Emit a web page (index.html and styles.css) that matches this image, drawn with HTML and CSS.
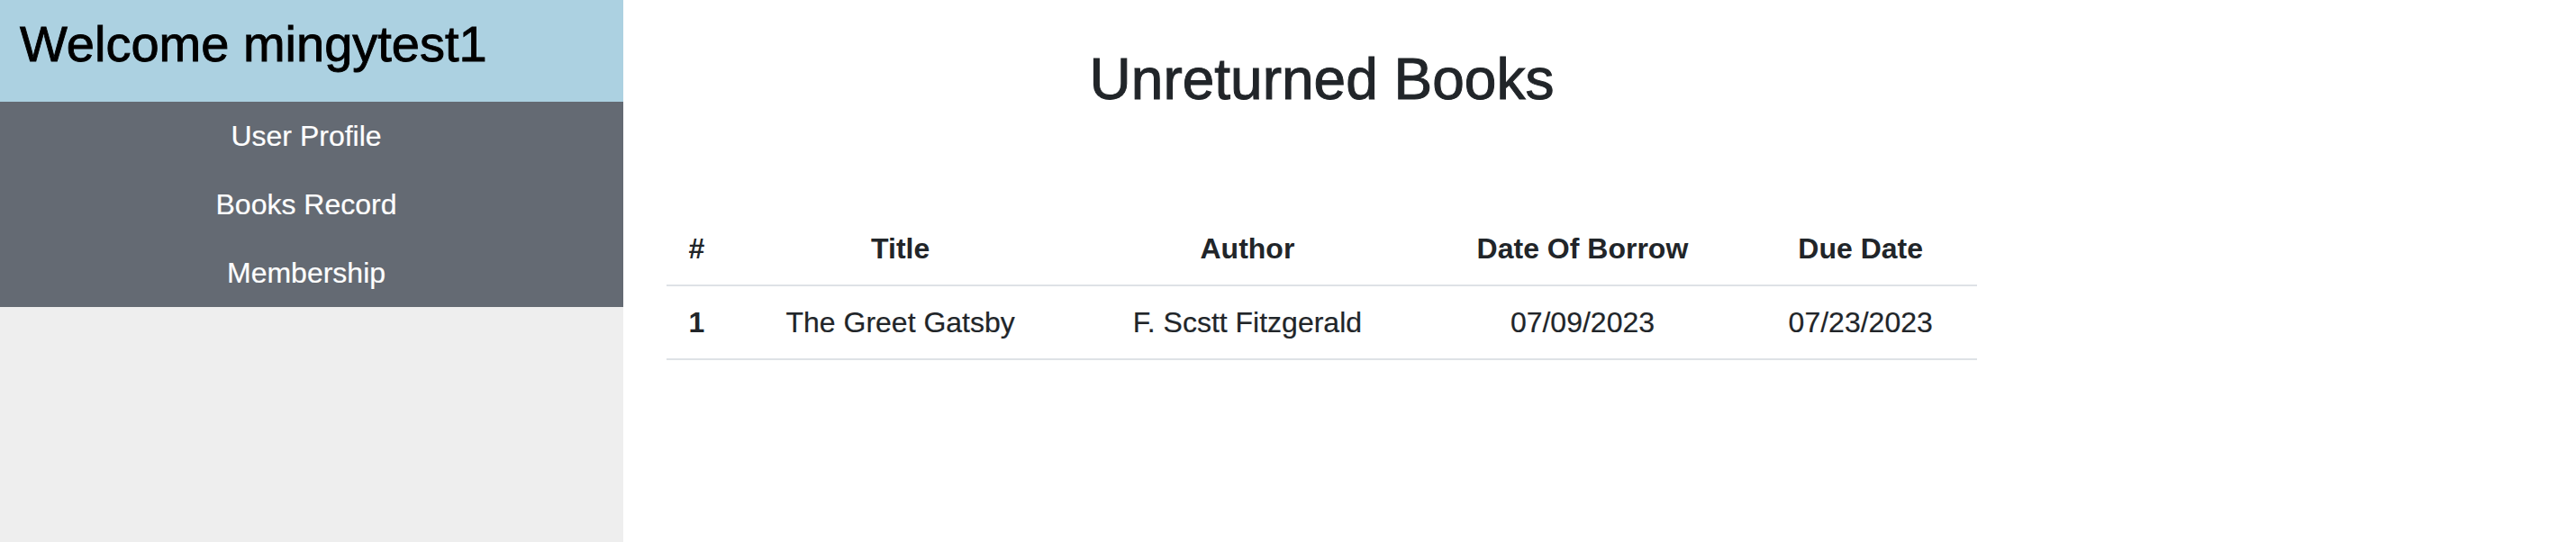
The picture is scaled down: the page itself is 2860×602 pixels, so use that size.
FILE: index.html
```html
<!DOCTYPE html>
<html lang="en">
<head>
<meta charset="utf-8">
<title>Unreturned Books</title>
<link rel="stylesheet" href="styles.css">
</head>
<body>
<div class="layout">
  <aside class="sidebar">
    <div class="welcome">
      <h3 class="welcome-title">Welcome mingytest1</h3>
    </div>
    <nav class="side-nav">
      <a class="nav-link" href="#">User Profile</a>
      <a class="nav-link" href="#">Books Record</a>
      <a class="nav-link" href="#">Membership</a>
    </nav>
  </aside>
  <main class="content">
    <h2 class="page-title">Unreturned Books</h2>
    <table class="books-table">
      <thead>
        <tr>
          <th>#</th>
          <th>Title</th>
          <th>Author</th>
          <th>Date Of Borrow</th>
          <th>Due Date</th>
        </tr>
      </thead>
      <tbody>
        <tr>
          <th>1</th>
          <td>The Greet Gatsby</td>
          <td>F. Scstt Fitzgerald</td>
          <td>07/09/2023</td>
          <td>07/23/2023</td>
        </tr>
      </tbody>
    </table>
  </main>
</div>
</body>
</html>
```

FILE: styles.css
```css
* {
  box-sizing: border-box;
}

html, body {
  margin: 0;
  padding: 0;
  background: #ffffff;
  font-family: "Liberation Sans", Arial, Helvetica, sans-serif;
  color: #212529;
}

.layout {
  display: flex;
  min-height: 602px;
}

.sidebar {
  width: 692px;
  flex: 0 0 692px;
  background: #eeeeee;
  display: flex;
  flex-direction: column;
}

.welcome {
  height: 113px;
  background: #acd1e1;
  padding: 15px 0 0 22px;
}

.welcome-title {
  margin: 0;
  font-size: 56px;
  font-weight: 400;
  line-height: 1.2;
  color: #000000;
  -webkit-text-stroke: 0.9px #000000;
}

.side-nav {
  background: #646a73;
  display: flex;
  flex-direction: column;
  padding-right: 12px;
}

.nav-link {
  display: block;
  height: 76px;
  padding: 14px 0;
  font-size: 32px;
  line-height: 48px;
  color: #ffffff;
  text-align: center;
  text-decoration: none;
  -webkit-text-stroke: 0.2px #ffffff;
}

.content {
  width: 1551px;
  padding: 50px 48px 0 48px;
}

.page-title {
  margin: 0;
  font-size: 64px;
  font-weight: 400;
  line-height: 1.2;
  text-align: center;
  color: #212529;
  -webkit-text-stroke: 1px #212529;
}

.books-table {
  width: 100%;
  margin-top: 109px;
  border-collapse: collapse;
  font-size: 32px;
  line-height: 48px;
  text-align: center;
}

.books-table th,
.books-table td {
  padding: 16px;
  border-bottom: 2px solid #dee2e6;
  vertical-align: top;
}

.books-table th {
  font-weight: 700;
}

.books-table td {
  font-weight: 400;
  -webkit-text-stroke: 0.2px #212529;
}
```
